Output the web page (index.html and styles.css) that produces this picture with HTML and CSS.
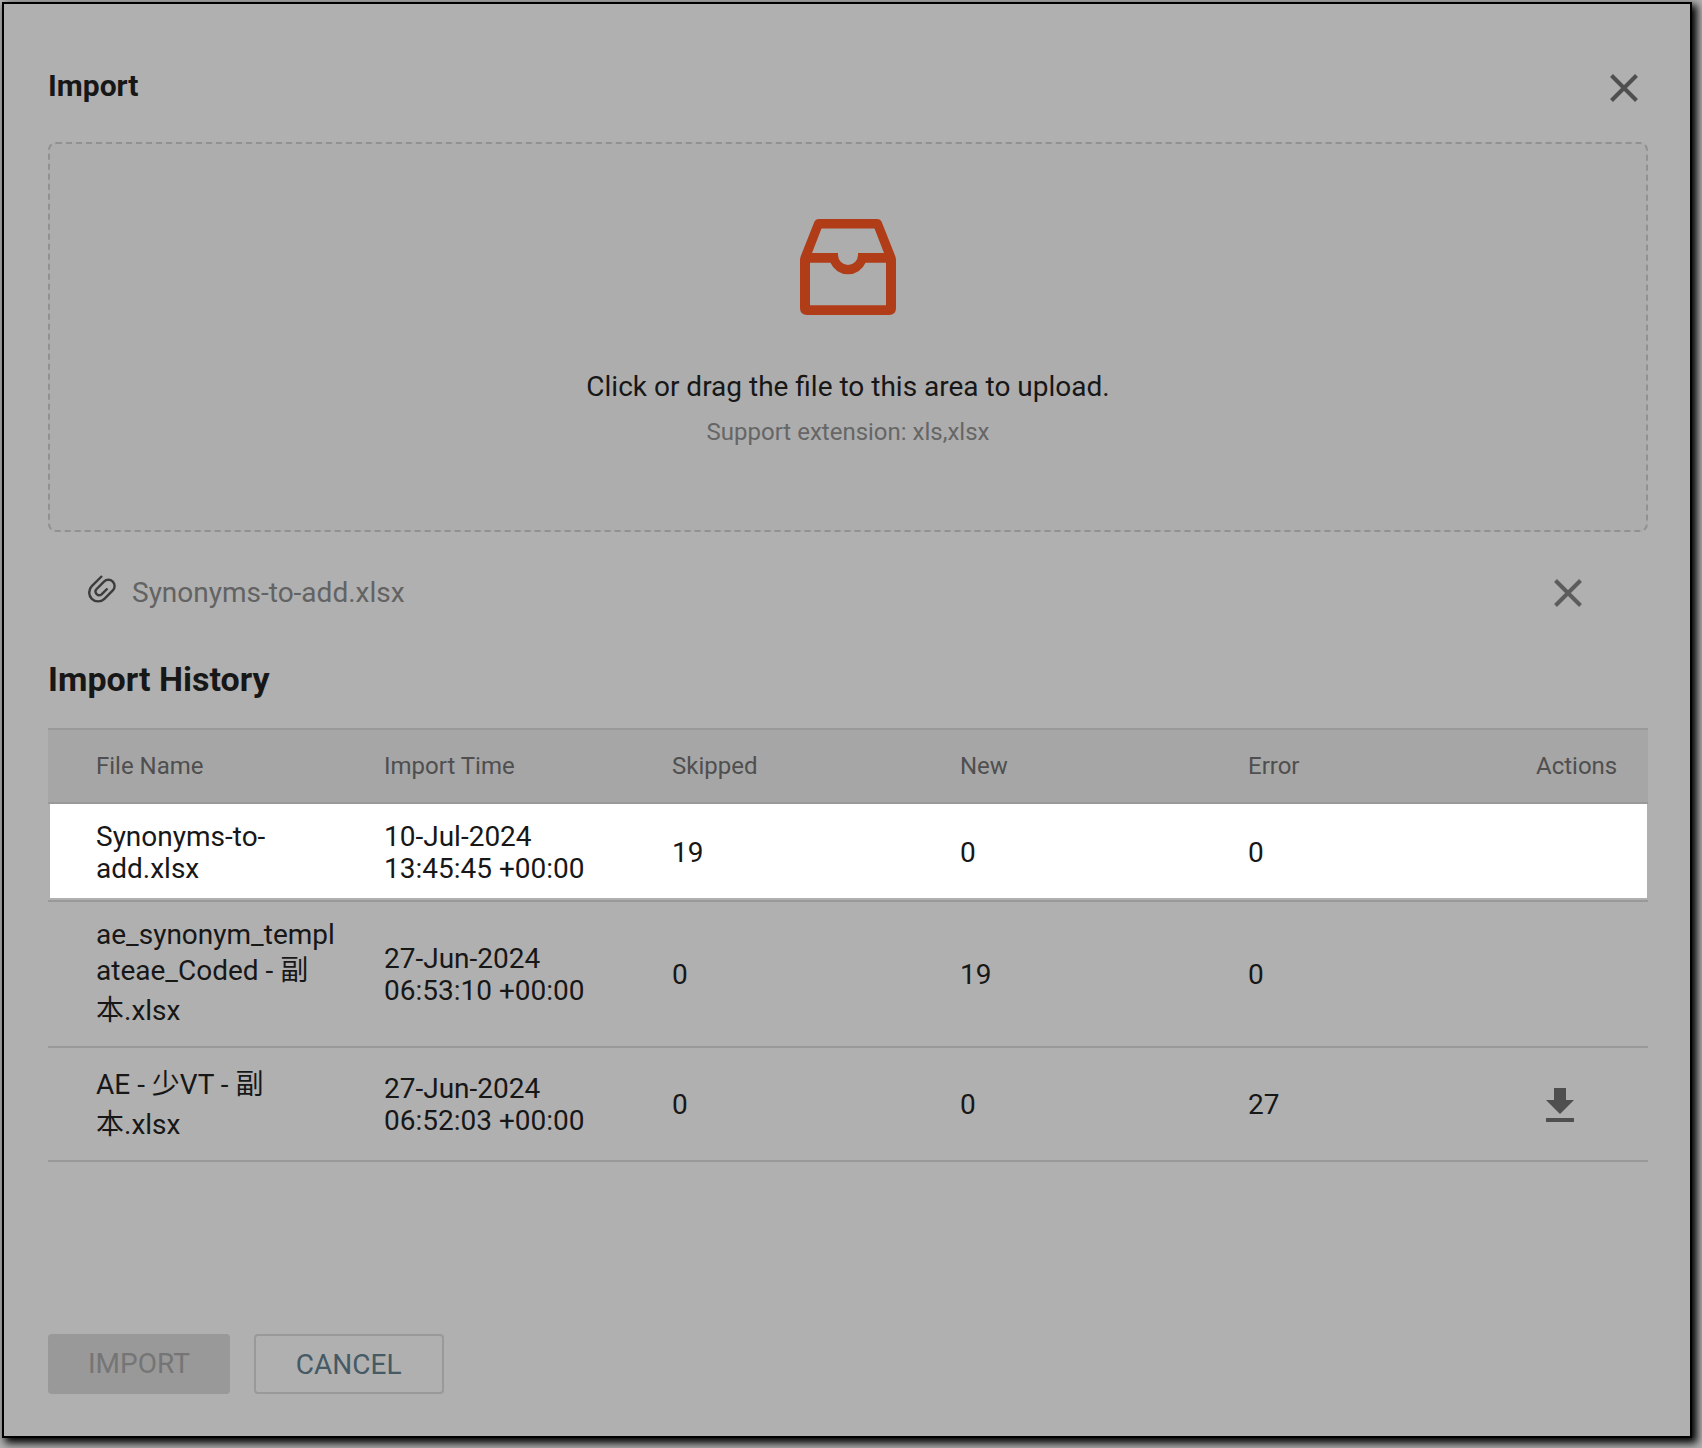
FILE: index.html
```html
<!DOCTYPE html>
<html lang="en">
<head>
<meta charset="utf-8">
<title>Import</title>
<meta name="viewport" content="width=device-width, initial-scale=1">
<link rel="stylesheet" href="styles.css">
</head>
<body>
<main class="dialog" role="dialog" aria-labelledby="dialog-title">
  <header class="dialog-header">
    <h1 class="dialog-title" id="dialog-title">Import</h1>
    <button class="icon-button" type="button" aria-label="Close">
      <svg class="icon-close" viewBox="0 0 28 28" aria-hidden="true"><path d="M1.5 1.5l25 25M26.5 1.5l-25 25"/></svg>
    </button>
  </header>

  <button class="dropzone" type="button">
    <svg class="dropzone-icon" viewBox="0 0 96 96" aria-hidden="true"><path fill-rule="evenodd" d="M19 0H77Q80.500 0 81.700 3L95 36.500Q96 39 96 41V89Q96 96 89 96H7Q0 96 0 89V41Q0 39 1 36.500L14.300 3Q15.500 0 19 0ZM21.500 9.500L12 34H38V36A10 10 0 0 0 58 36V34H84L74.500 9.500ZM10 43.700V86.300H86V43.700H65.500A19 19 0 0 1 30.500 43.700Z"/></svg>
    <span class="dropzone-text">Click or drag the file to this area to upload.</span>
    <span class="dropzone-hint">Support extension: xls,xlsx</span>
  </button>

  <div class="file">
    <svg class="file-clip" viewBox="0 0 28 28" aria-hidden="true"><path d="M14 1L3.800 11.200A8.900 8.900 0 0 0 16.400 23.800L24.800 15.400A6.200 6.200 0 0 0 16 6.600L8.400 14.200A3.700 3.700 0 0 0 13.600 19.400L19.500 13.500"/></svg>
    <span class="file-name">Synonyms-to-add.xlsx</span>
    <button class="icon-button muted" type="button" aria-label="Remove file">
      <svg class="icon-close" viewBox="0 0 28 28" aria-hidden="true"><path d="M1.500 1.500l25 25M26.500 1.500l-25 25"/></svg>
    </button>
  </div>

  <h2 class="history-title" id="history-title">Import History</h2>
  <table class="history" aria-labelledby="history-title">
    <thead>
      <tr><th>File Name</th><th>Import Time</th><th>Skipped</th><th>New</th><th>Error</th><th>Actions</th></tr>
    </thead>
    <tbody>
      <tr class="highlighted"><td>Synonyms-to-add.xlsx</td><td>10-Jul-2024 13:45:45 +00:00</td><td>19</td><td>0</td><td>0</td><td></td></tr>
      <tr><td>ae_synonym_templateae_Coded - <span class="han" lang="zh">副本</span>.xlsx</td><td>27-Jun-2024 06:53:10 +00:00</td><td>0</td><td>19</td><td>0</td><td></td></tr>
      <tr><td>AE - <span class="han" lang="zh">少</span>VT - <span class="han" lang="zh">副本</span>.xlsx</td><td>27-Jun-2024 06:52:03 +00:00</td><td>0</td><td>0</td><td>27</td>
        <td><button class="icon-button download" type="button" aria-label="Download"><svg class="icon-download" viewBox="0 0 28 34" aria-hidden="true"><path d="M8 0h12v12h8L14 26 0 12h8zM0 30h28v4H0z"/></svg></button></td></tr>
    </tbody>
  </table>

  <footer class="dialog-footer">
    <button class="button primary" type="button" disabled>IMPORT</button>
    <button class="button secondary" type="button">CANCEL</button>
  </footer>
</main>
</body>
</html>
```
FILE: styles.css
```css
* {
  box-sizing: border-box;
}

body {
  margin: 0;
  min-height: 100vh;
  display: flex;
  padding: 2px 10px 10px 2px;
  background: #b0b0b0;
  color: #171717;
  font: 28px/32px Roboto, "Noto Sans CJK SC", sans-serif;
}

button {
  margin: 0;
  padding: 0;
  border: 0;
  background: none;
  color: inherit;
  font: inherit;
}

.dialog {
  flex: 1;
  display: flex;
  flex-direction: column;
  padding: 60px 42px 42px 44px;
  border: 2px solid #000;
  background: #b0b0b0;
  box-shadow: 4px 4px 8px 1px #000;
}

.dialog-header {
  display: flex;
  align-items: flex-start;
  justify-content: space-between;
  height: 48px;
  padding-right: 8px;
}

.dialog-header .icon-button {
  margin-top: 8px;
}

.dialog-title,
.history-title {
  margin: 0;
  font-weight: 700;
}

.dialog-title {
  font-size: 30px;
  line-height: 44px;
}

.history-title {
  font-size: 34px;
  line-height: 40px;
}

.icon-button {
  display: flex;
  padding: 2px;
  color: #4f4f4f;
}

.muted {
  color: #5c5c5c;
}

.icon-close {
  width: 28px;
  height: 28px;
  fill: none;
  stroke: currentColor;
  stroke-width: 4;
}

.dropzone {
  display: flex;
  flex-direction: column;
  align-items: center;
  margin-top: 30px;
  padding: 75px 16px 82px;
  border: 2px dashed #919191;
  border-radius: 8px;
  background: #adadad;
}

.dropzone-icon {
  width: 96px;
  height: 96px;
  margin-bottom: 56px;
  fill: #b03c18;
}

.dropzone-hint {
  margin-top: 13px;
  color: #666;
  font-size: 24px;
}

.file {
  display: flex;
  align-items: center;
  gap: 16px;
  margin-top: 41px;
  padding: 0 64px 0 40px;
  height: 40px;
  color: #636363;
}

.file-clip {
  align-self: flex-start;
  width: 28px;
  height: 28px;
  margin-top: 2px;
  fill: none;
  stroke: #3c3c3c;
  stroke-width: 2.4;
}

.file-name {
  flex: 1;
}

.history-title {
  margin-top: 46px;
}

.history {
  width: 100%;
  margin-top: 29px;
  border-collapse: separate;
  border-spacing: 0;
  table-layout: fixed;
}

.history th,
.history td {
  width: 18%;
  padding: 17px 0 15px 48px;
  border-bottom: 2px solid #999;
  text-align: left;
  overflow-wrap: break-word;
}

.history th:last-child,
.history td:last-child {
  width: 10%;
}

.history th {
  padding-top: 20px;
  padding-bottom: 20px;
  border-top: 2px solid #999;
  background: #a6a6a6;
  color: #4f4f4f;
  font-size: 24px;
  font-weight: 400;
}

/* The highlight stops just short of the row's edges and bottom rule. */
.highlighted {
  background: linear-gradient(#fff, #fff) 2px 0 / calc(100% - 3px) calc(100% - 4px) no-repeat;
}

.history td:nth-child(2) {
  padding-right: 20px;
}

.han {
  line-height: 40px;
}

.download {
  padding: 0 10px;
}

.icon-download {
  width: 28px;
  height: 34px;
  fill: #4f4f4f;
}

.dialog-footer {
  display: flex;
  gap: 24px;
  margin-top: auto;
}

.button {
  height: 60px;
  padding: 0 40px;
  border-radius: 4px;
}

.primary {
  background: #999;
  color: #757575;
}

.secondary {
  padding-top: 2px;
  border: 2px solid #999;
  color: #455a64;
}
```
